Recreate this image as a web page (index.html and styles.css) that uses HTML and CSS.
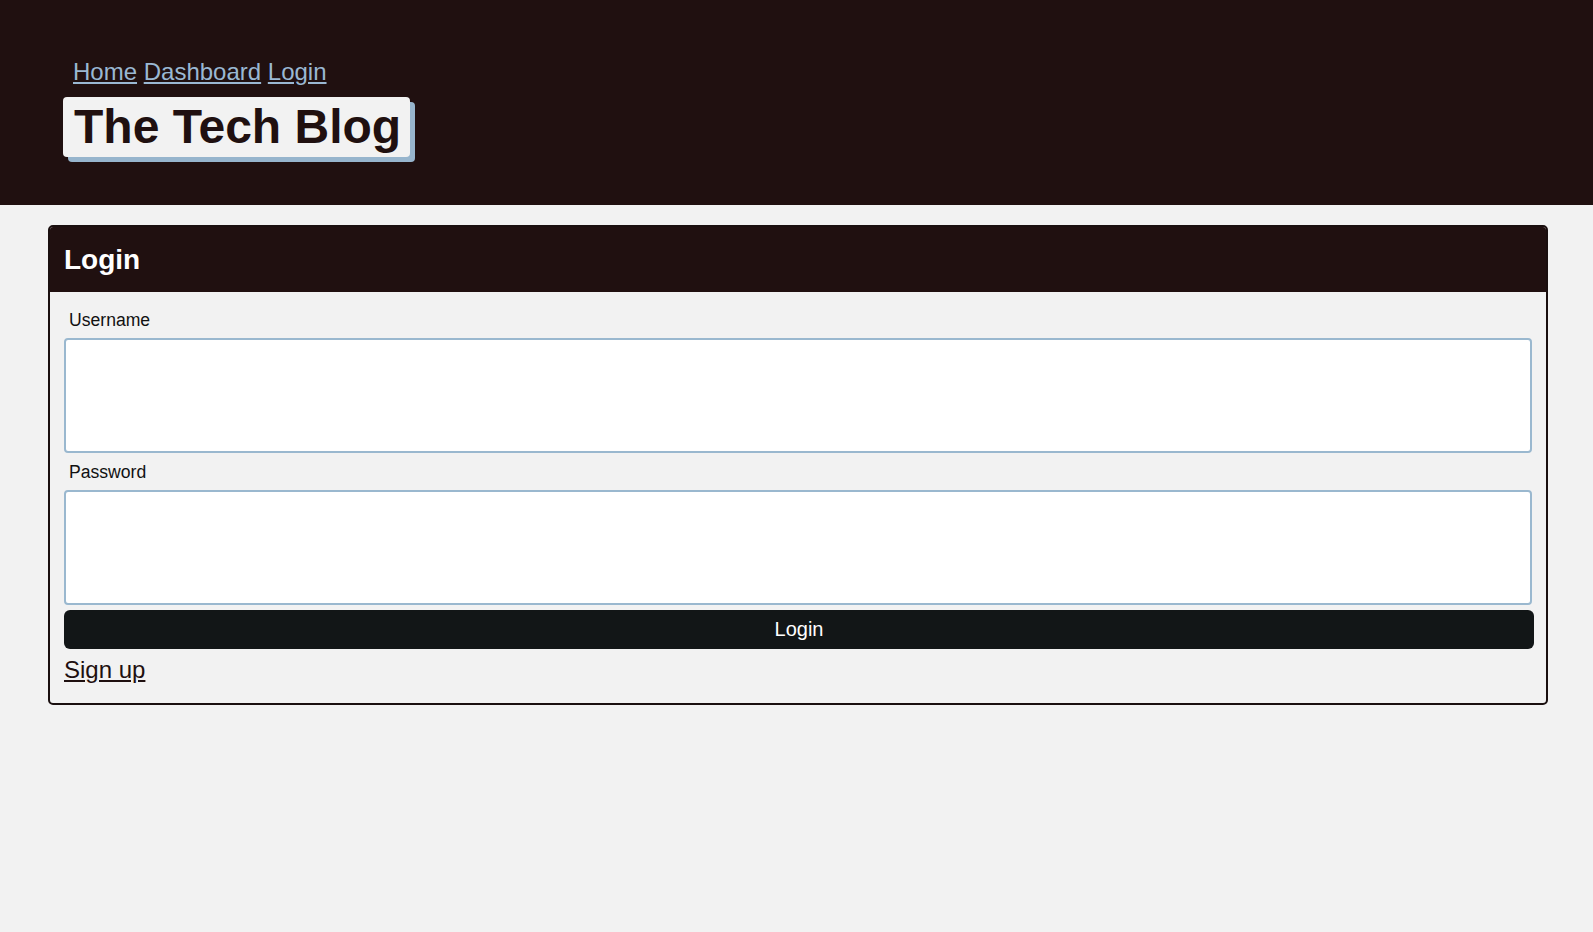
FILE: index.html
```html
<!DOCTYPE html>
<html lang="en">
<head>
<meta charset="utf-8">
<title>The Tech Blog</title>
<link rel="stylesheet" href="styles.css">
</head>
<body>
<header class="site-header">
  <nav class="nav"><a href="#">Home</a> <a href="#">Dashboard</a> <a href="#">Login</a></nav>
  <h1 class="brand">The Tech Blog</h1>
</header>
<main class="main">
  <section class="card">
    <div class="card-header"><h2 class="card-title">Login</h2></div>
    <div class="card-body">
      <form class="login-form">
        <label class="field-label" for="username">Username</label>
        <input class="field-input" id="username" type="text">
        <label class="field-label" for="password">Password</label>
        <input class="field-input" id="password" type="password">
        <button class="btn" type="button">Login</button>
      </form>
      <a class="signup" href="#">Sign up</a>
    </div>
  </section>
</main>
</body>
</html>
```

FILE: styles.css
```css
* { box-sizing: border-box; }

html, body {
  margin: 0;
  padding: 0;
  background: #f2f2f2;
  font-family: "Liberation Sans", Arial, sans-serif;
  color: #1f1010;
}

.site-header {
  background: #201010;
  padding: 58px 0 48px 63px;
}

.nav {
  padding-left: 10px;
  font-size: 24px;
  line-height: 28px;
}

.nav a {
  color: #9ab8d3;
  text-decoration: underline;
}

.brand {
  display: inline-block;
  margin: 11px 0 0;
  padding: 2px 9px 2px 11px;
  font-size: 48px;
  line-height: 56px;
  font-weight: bold;
  color: #201010;
  background: #f2f2f2;
  border-radius: 4px;
  box-shadow: 5px 5px 0 #97b5cd;
}

.main {
  padding: 20px 45px 40px 48px;
}

.card {
  border: 2px solid #1a0f0f;
  border-radius: 5px;
  overflow: hidden;
  background: #f2f2f2;
}

.card-header {
  background: #201010;
  padding: 0 14px;
  height: 65px;
}

.card-title {
  margin: 0;
  font-size: 28px;
  line-height: 65px;
  font-weight: bold;
  color: #ffffff;
}

.card-body {
  padding: 18px 14px 19px;
}

.login-form {
  display: flex;
  flex-direction: column;
}

.field-label {
  display: block;
  padding-left: 5px;
  margin-bottom: 8px;
  font-size: 17.6px;
  line-height: 20px;
  color: #111;
}

.field-input {
  display: block;
  width: 100%;
  height: 115px;
  margin: 0 0 9px;
  border: 2px solid #9ab8cf;
  border-radius: 4px;
  background: #ffffff;
  font-size: 16px;
}

.field-input + .btn {
  margin-top: -4px;
}

.btn {
  display: block;
  width: calc(100% + 2px);
  height: 39px;
  border: none;
  border-radius: 6px;
  background: #121617;
  color: #ffffff;
  font-family: "Liberation Sans", Arial, sans-serif;
  font-size: 20px;
  cursor: pointer;
}

.signup {
  display: inline-block;
  margin-top: 7px;
  font-size: 24px;
  line-height: 28px;
  color: #1f1010;
  text-decoration: underline;
}
```
